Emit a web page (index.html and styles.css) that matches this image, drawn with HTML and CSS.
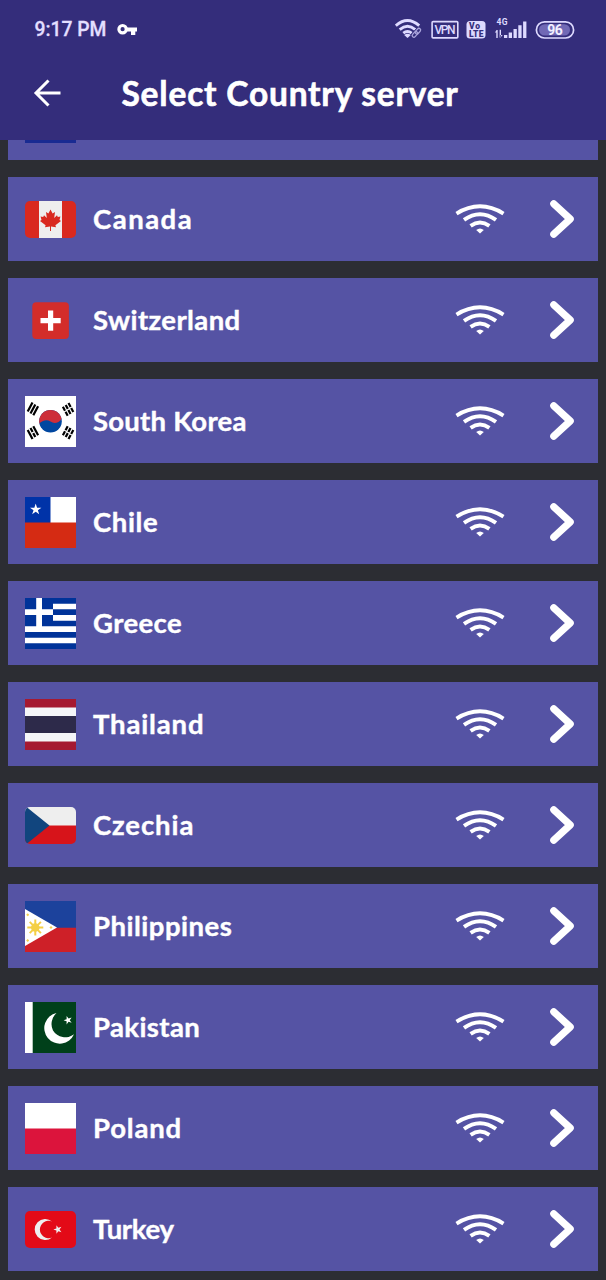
FILE: index.html
```html
<!DOCTYPE html>
<html lang="en">
<head>
<meta charset="utf-8">
<title>Select Country server</title>
<link rel="stylesheet" href="styles.css">
</head>
<body>
<svg class="defs" width="0" height="0">
  <symbol id="wifi" viewBox="0 0 50 30">
    <g fill="none" stroke="#fff">
      <path d="M1.5 9.6Q25-4.9 48.5 9.6" stroke-width="3.9"/>
      <path d="M9 15.9Q25 4.7 41 15.9" stroke-width="4"/>
      <path d="M15.6 21.8Q25 15.2 34.4 21.8" stroke-width="3.9"/>
    </g>
    <path d="M21.2 26Q25 22.8 28.8 26L25 29.4Z" fill="#fff"/>
  </symbol>
  <symbol id="chevron" viewBox="0 0 26 40">
    <path d="M4.8 4.8L21.2 20 4.8 35.2" fill="none" stroke="#fff" stroke-width="7.2" stroke-linecap="round" stroke-linejoin="round"/>
  </symbol>
  <symbol id="star" viewBox="-10 -10 20 20">
    <path d="M0-10L2.25-3.1 9.5-3.1 3.64 1.18 5.88 8.1 0 3.82-5.88 8.1-3.64 1.18-9.5-3.1-2.25-3.1Z"/>
  </symbol>
</svg>
<div class="screen">
  <header class="header">
    <div class="status">
      <span class="time">9:17 PM</span>
      <svg class="key" width="20" height="13" viewBox="0 0 20 13"><circle cx="5.6" cy="6.2" r="3.7" fill="none" stroke="#fff" stroke-width="3.2"/><path d="M9.5 4.4H20V8.4H18.3V12H14V8.4H9.5Z" fill="#fff"/></svg>
      <svg class="indicators" width="184" height="24" viewBox="0 0 184 24" fill="#dedaff">
        <g fill="none" stroke="#dedaff" stroke-width="2.9">
          <path d="M.8 8.7Q12.5-1.5 24.2 8.7"/>
          <path d="M4.7 12.6Q12.5 6 20.3 12.6"/>
          <path d="M8.3 16.2Q12.5 12.8 16.7 16.2"/>
        </g>
        <path d="M9.2 18Q12.5 15.5 15.8 18L12.5 21Z"/>
        <rect x="19.5" y="12" width="3.4" height="9" rx="1.7" transform="rotate(42 21.2 16.5)" fill="none" stroke="#342d7b" stroke-width="3.4"/>
        <g fill="none" stroke="#aaa4dc" stroke-width="1.3"><rect x="18.2" y="14.2" width="3.4" height="6.4" rx="1.7" transform="rotate(42 19.9 17.4)"/><rect x="21.2" y="11" width="3.4" height="6.4" rx="1.7" transform="rotate(42 22.9 14.2)"/></g>
        <rect x="37.1" y="4.6" width="25.7" height="16.3" rx="1" fill="none" stroke="#dedaff" stroke-width="1.6"/>
        <text class="t-vpn" x="39.5" y="17.2" textLength="21">VPN</text>
        <rect x="71.5" y="4" width="19" height="17.5" rx="3.5"/>
        <text class="t-volte" x="74" y="12" textLength="11">Vo</text>
        <text class="t-volte" x="74" y="19.7" textLength="14.5">LTE</text>
        <text class="t-4g" x="101.5" y="8.4" textLength="11">4G</text>
        <path d="M101.3 13h1.4v8h-1.4zM99.8 15.5L102 12.700V15.5ZM104.600 12.700H106V20.500H104.600ZM105.300 20.800L107.700 18H105.300Z"/>
        <path d="M109 18h3.300v3h-3.300zM113.700 15.500h3.300V21h-3.300zM118.500 12h3.300v9h-3.300zM123.300 8.200h3.300V21h-3.300zM128.100 4.500h3.300V21h-3.300z"/>
        <rect x="141.400" y="4.800" width="37.200" height="16.200" rx="8.100" fill="none" stroke="#dedaff" stroke-width="1.700"/>
        <rect x="144" y="7.200" width="31" height="11.400" rx="5.700" fill="#7169b5"/>
        <text class="t-bat" x="152.300" y="17.700" textLength="15.500">96</text>
      </svg>
    </div>
    <div class="titlebar">
      <svg width="30" height="30" viewBox="0 0 30 30"><path d="M28.5 15H3.5M16.5 2.5L4 15 16.5 27.5" fill="none" stroke="#fff" stroke-width="3"/></svg>
      <h1 class="title">Select Country server</h1>
    </div>
  </header>
  <main class="list">
    <div class="row partial"><i class="partial-flag"></i></div>
    <div class="row">
      <svg class="flag" viewBox="0 0 51 51"><rect y="7" width="51" height="37" rx="5" fill="#d9291f"/><path d="M14 7H37V44H14Z" fill="#eee"/><path d="M25.5 15.5L27.6 19.4 30 18 29.2 24 32 21.2 32.8 23 35.4 22.5 34.5 26 36 27 30.4 31.2 31 33.2 26 32.5V37H25V32.5L20 33.2 20.6 31.2 15 27 16.5 26 15.6 22.5 18.2 23 19 21.2 21.8 24 21 18 23.4 19.4Z" fill="#d9291f"/></svg>
      <span class="name canada">Canada</span>
      <svg class="wifi"><use href="#wifi"/></svg><svg class="chevron"><use href="#chevron"/></svg>
    </div>
    <div class="row">
      <svg class="flag" viewBox="0 0 51 51"><rect x="7.3" y="7.3" width="36.6" height="36.6" rx="4" fill="#d32d2a"/><path d="M23 15.5h5.2V23H35.7V28.2H28.2V35.7H23V28.2H15.5V23H23Z" fill="#fff"/></svg>
      <span class="name switzerland">Switzerland</span>
      <svg class="wifi"><use href="#wifi"/></svg><svg class="chevron"><use href="#chevron"/></svg>
    </div>
    <div class="row">
      <svg class="flag" viewBox="0 0 51 51"><path d="M0 0H51V51H0Z" fill="#fff"/>
        <clipPath id="taeguk"><circle cx="25.5" cy="25.3" r="11.3"/></clipPath>
        <g clip-path="url(#taeguk)"><path d="M14 13H37V37H14Z" fill="#0047a0"/><path d="M14 13H37V22.5C33.5 27.5 29 28 25.500 25.600C22 23.200 17.500 24 14 28Z" fill="#cd2e3a"/></g>
        <g stroke="#000" stroke-width="2.2">
          <path d="M2.7 15.5L7.5 6.5M5.5 17.4L10.3 8.4M8.3 19.3L13.1 10.3"/>
          <path d="M37.9 39.2L42.7 30.2M40.7 41.1L45.5 32.1M43.5 43L48.3 34" stroke-dasharray="4.5 1.2"/>
          <path d="M43.5 7L48.3 16M40.7 8.9L45.5 17.9M37.9 10.8L42.7 19.8" stroke-dasharray="4.5 1.2"/>
          <path d="M8.3 30.2L13.1 39.2M2.7 34L7.5 43"/>
          <path d="M5.5 32.1L10.3 41.1" stroke-dasharray="4.5 1.2"/>
        </g></svg>
      <span class="name korea">South Korea</span>
      <svg class="wifi"><use href="#wifi"/></svg><svg class="chevron"><use href="#chevron"/></svg>
    </div>
    <div class="row">
      <svg class="flag" viewBox="0 0 51 51"><path d="M0 0H51V26H0Z" fill="#fff"/><path d="M0 0H25.5V26H0Z" fill="#0033a8"/><path d="M0 25.5H51V51H0Z" fill="#d52b13"/><use href="#star" x="4.7" y="6.5" width="12" height="12" fill="#fff"/></svg>
      <span class="name chile">Chile</span>
      <svg class="wifi"><use href="#wifi"/></svg><svg class="chevron"><use href="#chevron"/></svg>
    </div>
    <div class="row">
      <svg class="flag" viewBox="0 0 51 51"><path d="M0 0H51V51H0Z" fill="#003399"/><path d="M28 5.7H51V11.3H28ZM28 17H51V22.7H28ZM0 28.3H51V34H0ZM0 39.7H51V45.3H0ZM0 11.3H28V17H0ZM11.2 0H17V28.3H11.2Z" fill="#fff"/></svg>
      <span class="name">Greece</span>
      <svg class="wifi"><use href="#wifi"/></svg><svg class="chevron"><use href="#chevron"/></svg>
    </div>
    <div class="row">
      <svg class="flag" viewBox="0 0 51 51"><path d="M0 0H51V51H0Z" fill="#a51931"/><path d="M0 8.5H51V42.5H0Z" fill="#f4f5f8"/><path d="M0 17H51V34H0Z" fill="#2d2a4a"/></svg>
      <span class="name thailand">Thailand</span>
      <svg class="wifi"><use href="#wifi"/></svg><svg class="chevron"><use href="#chevron"/></svg>
    </div>
    <div class="row">
      <svg class="flag" viewBox="0 0 51 51"><clipPath id="cz"><rect y="7" width="51" height="37" rx="5"/></clipPath><g clip-path="url(#cz)"><path d="M0 7H51V26H0Z" fill="#eee"/><path d="M0 25.5H51V44H0Z" fill="#d7141a"/><path d="M1.5 7L24.5 25.5 1.5 44H0V7Z" fill="#11457e"/></g></svg>
      <span class="name czechia">Czechia</span>
      <svg class="wifi"><use href="#wifi"/></svg><svg class="chevron"><use href="#chevron"/></svg>
    </div>
    <div class="row">
      <svg class="flag" viewBox="0 0 51 51"><path d="M0 0H51V27H0Z" fill="#1c429c"/><path d="M0 26.7H51V51H0Z" fill="#ce2028"/><path d="M0 8L32 26.5 0 45Z" fill="#fff"/><g fill="#f4cf45" stroke="#f4cf45"><circle cx="10.3" cy="26.5" r="4.3" stroke="none"/><path d="M10.3 18.5V34.5M2.3 26.5H18.3M4.7 20.9L15.9 32.1M15.9 20.9L4.7 32.1" stroke-width="2"/><circle cx="2.7" cy="13.8" r=".8"/><circle cx="2.7" cy="39.5" r=".8"/><circle cx="26" cy="26.5" r=".8"/></g></svg>
      <span class="name philippines">Philippines</span>
      <svg class="wifi"><use href="#wifi"/></svg><svg class="chevron"><use href="#chevron"/></svg>
    </div>
    <div class="row">
      <svg class="flag" viewBox="0 0 51 51"><path d="M0 0H51V51H0Z" fill="#fff"/><path d="M7.7 0H51V51H7.7Z" fill="#00401a"/><path d="M31.5 11A15.500 15.500 0 1 0 49 32.300A14.300 14.300 0 0 1 28 28.500A14.800 14.800 0 0 1 31.500 11Z" fill="#fff"/><use href="#star" x="38.500" y="13.700" width="9" height="9" fill="#fff" transform="rotate(-18 43 18.200)"/></svg>
      <span class="name">Pakistan</span>
      <svg class="wifi"><use href="#wifi"/></svg><svg class="chevron"><use href="#chevron"/></svg>
    </div>
    <div class="row">
      <svg class="flag" viewBox="0 0 51 51"><path d="M0 0H51V26H0Z" fill="#fff"/><path d="M0 25.5H51V51H0Z" fill="#dc143c"/></svg>
      <span class="name poland">Poland</span>
      <svg class="wifi"><use href="#wifi"/></svg><svg class="chevron"><use href="#chevron"/></svg>
    </div>
    <div class="row">
      <svg class="flag" viewBox="0 0 51 51"><rect y="7" width="51" height="37" rx="5" fill="#e30a17"/><path d="M27 17.500A10.500 10.500 0 1 0 27 33.500A8.700 8.700 0 1 1 27 17.500Z" fill="#eee"/><use href="#star" x="28.300" y="21" width="9" height="9" fill="#eee" transform="rotate(-18 32.800 25.500)"/></svg>
      <span class="name turkey">Turkey</span>
      <svg class="wifi"><use href="#wifi"/></svg><svg class="chevron"><use href="#chevron"/></svg>
    </div>
  </main>
</div>
</body>
</html>
```
FILE: styles.css
```css
* { box-sizing: border-box; }
body {
  margin: 0;
  background: #2c2d33;
  color: #fff;
  font-family: Lato, "Open Sans", sans-serif;
}
.defs { display: block; }
.screen { width: 606px; height: 1280px; overflow: hidden; }
.header { height: 140px; background: #342d7b; }
.status {
  display: flex;
  align-items: center;
  height: 59px;
  padding: 0 26px 0 34.5px;
}
.time {
  width: 72px;
  color: #e3dfff;
  font: 500 19.3px/24px Roboto, sans-serif;
  -webkit-text-stroke: .3px #e3dfff;
  white-space: nowrap;
}
.key { margin-left: 10.5px; }
.indicators { margin: -1px 1px 0 auto; }
.t-vpn { font: 500 12px Roboto, sans-serif; }
.t-volte { font: 900 8.5px Roboto, sans-serif; fill: #342d7b; }
.t-4g { font: 700 8.5px Roboto, sans-serif; }
.t-bat { font: 700 14px Roboto, sans-serif; fill: #f3f0ff; }
.titlebar {
  display: flex;
  align-items: center;
  height: 68px;
  padding-left: 31.5px;
  gap: 60px;
}
.title {
  margin: 0;
  font-size: 33.5px;
  line-height: 40px;
  font-weight: 700;
  letter-spacing: .8px;
  -webkit-text-stroke: .6px #fff;
  white-space: nowrap;
}
.list {
  display: flex;
  flex-direction: column;
  gap: 17px;
  padding: 0 8.3px;
}
.row {
  display: flex;
  align-items: center;
  flex: none;
  height: 84px;
  padding: 0 23px 0 16.7px;
  background: #5553a4;
}
.partial { height: 20px; align-items: flex-start; }
.partial-flag { width: 51px; height: 3px; background: #192b92; }
.flag { width: 51px; height: 51px; flex: none; }
.name {
  flex: 1;
  padding-left: 17px;
  font-size: 27.5px;
  line-height: 34px;
  font-weight: 700;
  letter-spacing: .4px;
  -webkit-text-stroke: .4px #fff;
}
.canada { letter-spacing: 1.5px; }
.switzerland { letter-spacing: .4px; }
.korea { letter-spacing: .25px; }
.chile { letter-spacing: .6px; }
.thailand { letter-spacing: .85px; }
.czechia { letter-spacing: .9px; }
.philippines { letter-spacing: .5px; }
.poland { letter-spacing: .8px; }
.turkey { letter-spacing: -.3px; }
.wifi { width: 50px; height: 30px; }
.chevron { width: 26px; height: 40px; margin-left: 44px; }
```
